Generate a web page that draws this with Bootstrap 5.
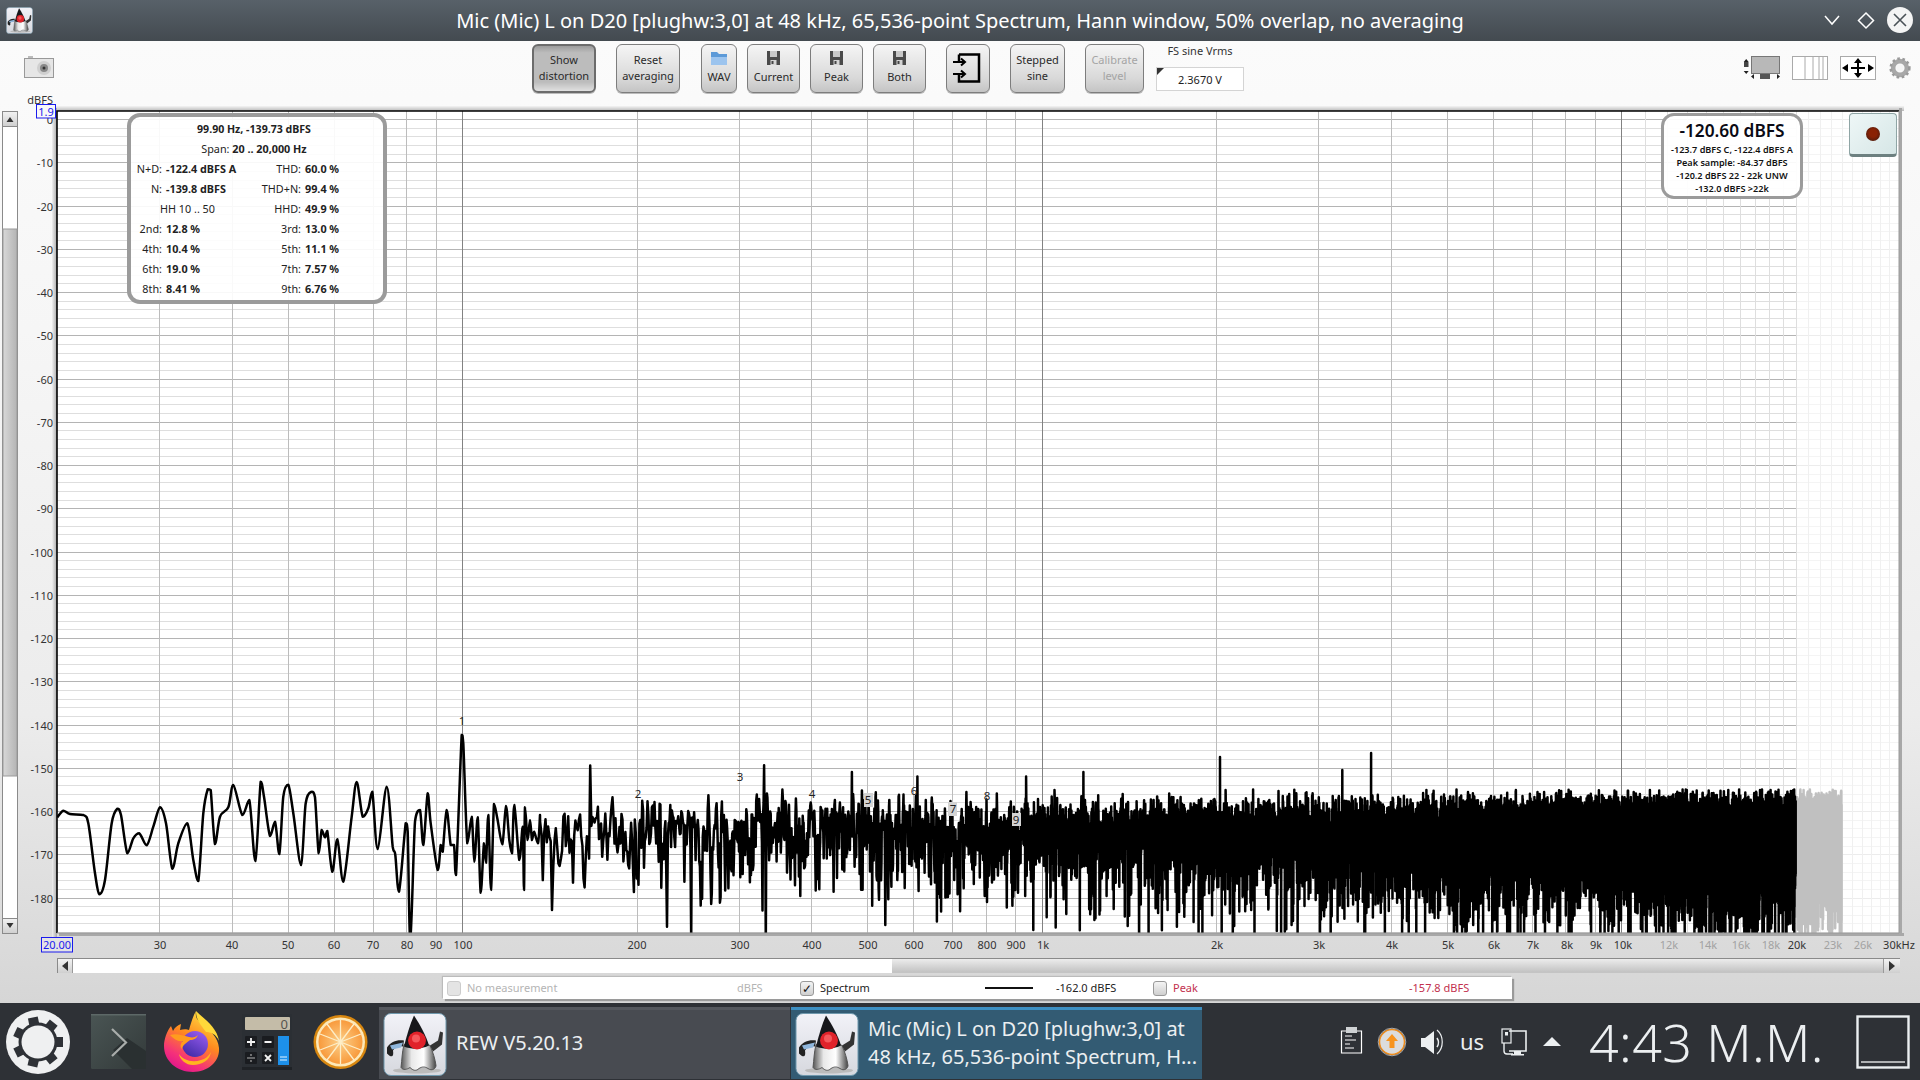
<!DOCTYPE html>
<html lang="en">
<head>
<meta charset="utf-8">
<title>REW Spectrum</title>
<link href="https://cdn.jsdelivr.net/npm/bootstrap@5.3.0/dist/css/bootstrap.min.css" rel="stylesheet">
<style>
html,body{width:1920px;height:1080px;overflow:hidden;margin:0}
body{font-family:"Noto Sans","Liberation Sans",sans-serif;background:#2e3136}
.title-strip{height:41px;background:linear-gradient(#586169,#434a50);color:#fff}
.title-ico{width:96px;padding-left:6px}
.title-txt{font-size:20px;white-space:nowrap}
.win-ctl{width:96px}
.app-win{height:962px;background:linear-gradient(#fbfbfb 0%,#f6f6f6 30%,#ececec 70%,#d6d6d6 100%)}
.tool-row{height:59px;padding-top:3px}
.rew-btn{height:49px;padding:0 0 2px;font-size:11px;line-height:16px;color:#2a2a2a;border:1px solid #7d7d7d;border-radius:6px;background:linear-gradient(#f5f5f5,#d9d9d9 70%,#c4c4c4);box-shadow:0 1px 0 #bbb}
.rew-btn-on{background:linear-gradient(#9c9c9c,#bcbcbc 15%,#bcbcbc 80%,#e0e0e0);border:2px solid #6c6c6c}
.rew-btn-off{color:#a4a4a4}
.stack-btn{line-height:14px}
.stack-btn svg{display:block;margin:0 auto 5px}
.bw64{width:64px}.bw36{width:36px}.bw53{width:53px}.bw44{width:44px}.bw55{width:55px}.bw59{width:59px}
.gap10{margin-left:10px}.gap20{margin-left:20px}.gap21{margin-left:21px}.gap12{margin-left:12px}.gap13{margin-left:13px}
.cam-slot{margin:12px 478px 0 24px}
.fs-slot{width:88px;font-size:11px;color:#333;text-align:center;line-height:14px}
.fs-val{position:relative;margin-top:9px;height:24px;line-height:24px;background:#fff;border:1px solid #d4d4d4;color:#222;font-size:11px}
.fs-val::before{content:"";position:absolute;left:0;top:0;border-top:7px solid #333;border-right:7px solid transparent}
.right-tools{margin-left:auto;padding:12px 9px 0 0}
.plot-wrap{height:855px}
.plot-svg{display:block;overflow:visible}
.axt{font-size:11px;fill:#333;font-family:"Noto Sans",sans-serif}
.axt-faint{fill:#a2a2a2}
.axt-blue{fill:#1a1aee}
.pk{font-size:11.5px;fill:#222;font-family:"Noto Sans",sans-serif}
.info-panel{position:absolute;left:127px;top:13px;width:260px;height:191px;border:4px solid #9b9b9b;border-radius:13px;background:rgba(255,255,255,.9);font-size:10.8px;line-height:20px;color:#222;padding:2px 0 0 0;white-space:nowrap}
.info-grid{display:grid;grid-template-columns:31px 72px 59px auto;column-gap:4px}
.info-span{grid-column:1/-1;text-align:center;padding-right:6px}
.info-tight{font-size:10.6px}
.info-lbl{text-align:right}
.info-mid{grid-column:1/3;text-align:center;padding-left:6px}
.level-panel{position:absolute;left:1661px;top:13px;width:142px;height:86px;border:3px solid #9b9b9b;border-radius:13px;background:rgba(255,255,255,.92);text-align:center;color:#111;font-size:9.1px;font-weight:600;line-height:13px;white-space:nowrap;padding-top:3px}
.level-big{font-size:17.3px;line-height:24px;font-weight:600;color:#0a0a14}
.rec-btn{position:absolute;left:1849px;top:13px;width:48px;height:44px;padding:0;border:1px solid #8fa5a5;border-bottom:3px solid #6d8080;border-radius:4px;background:linear-gradient(135deg,#eef7f7,#d6e6e6)}
.rec-dot{display:block;width:14px;height:14px;margin:auto;border-radius:50%;background:radial-gradient(circle at 50% 45%,#8a2204 35%,#351a12 100%)}
.h-scroll{height:15px;margin:3px 20px 0 57px;border:1px solid #8a8a8a;border-width:1px 0 0 1px}
.sb-end{width:15px;background:linear-gradient(#f2f2f2,#cfcfcf);border-right:1px solid #999;font-size:0}
.sb-end-r{width:17px;border-right:0;border-left:1px solid #999}
.sb-track{width:819px;background:#fff}
.sb-thumb{background:linear-gradient(#ececec,#c4c4c4 90%)}
.legend-bar{display:grid;grid-template-columns:20px 270px 63px 20px 165px 71px 97px 20px 236px auto;align-items:center;height:22px;width:1069px;margin:4px 0 0 443px;padding-left:4px;background:#fff;box-shadow:-1px -1px 1px #bbb,2px 2px 1px #9a9a9a;font-size:11px;color:#222;white-space:nowrap}
.lg-box{width:14px;height:15px;border:1px solid #999;border-radius:3px;background:linear-gradient(#f4f4f4,#cfcfcf);display:block;text-align:center;line-height:13px;font-size:12px;color:#111}
.lg-box-dim{border-color:#ccc;background:#e4e4e4}
.lg-dim{color:#b4b4b4}
.lg-peak{color:#c2304e}
.lg-line{display:block;height:2px;width:48px;background:#111}
.task-row{height:77px;background:#2e3136;color:#eceff1}
.task-row>*{flex-shrink:0}
.ico-gear{margin-left:6px}.ico-term{margin-left:21px}.ico-fx{margin-left:17px}.ico-calc{margin-left:19px}.ico-orange{margin-left:21px}
.task-item{height:72px;margin-top:3px;width:411px;background:#484b51;border-top:3px solid #55585e;font-size:20px;line-height:28px}
.task-first{margin-left:11px}
.task-active{margin-left:1px;background:#335b73;border-top:3px solid #3d8fc2}
.task-lbl{padding:0 0 3px 9px;white-space:nowrap}
.task-ico{margin:0 0 0 4px}
.tray{margin-left:130px}
.tray-us{font-size:22px;width:40px;text-align:center}
.clock{font-size:52px;font-weight:300;margin-left:17px;line-height:77px;white-space:nowrap;width:267px;letter-spacing:.4px}
</style>
</head>
<body>
<svg width="0" height="0" class="d-block">
 <defs>
  <linearGradient id="dkBg" x1="0" y1="0" x2="0" y2="1"><stop offset="0" stop-color="#f2f2f8"/><stop offset="1" stop-color="#d6d8de"/></linearGradient>
  <linearGradient id="dkBody" x1="0" y1="0" x2="1" y2="0"><stop offset="0" stop-color="#555"/><stop offset=".3" stop-color="#e8e8e8"/><stop offset=".65" stop-color="#fff"/><stop offset="1" stop-color="#444"/></linearGradient>
  <symbol id="duke" viewBox="0 0 64 64">
   <rect x="1" y="1" width="62" height="62" rx="7" fill="url(#dkBg)" stroke="#6f98ad"/>
   <ellipse cx="34" cy="58" rx="24" ry="3" fill="#bbb"/>
   <path d="M4 35c4-6 10-8 17-7l-1 6c-5-1-8 1-10 4 1 6-1 8-6 3z" fill="#222"/>
   <path d="M7 33l13-3-2 5-9 2z" fill="#8fb6dc"/>
   <path d="M21 32C30 29 40 29 47 33c3 7 5 13 6 20 0 3-4 6-8 3-3-2-6-2-9 0-3 3-6 2-9-1-3 2-7 3-9 0 1-8 1-15 3-23z" fill="url(#dkBody)" stroke="#555"/>
   <path d="M47 33l8-5 2-9 3 1-1 12-9 7z" fill="#333"/>
   <path d="M31 3C37 12 43 23 46 33 38 37 28 37 21 34 24 22 27 12 31 3z" fill="#17171b"/>
   <circle cx="34" cy="28" r="9" fill="#e0222a"/>
   <circle cx="33" cy="26" r="4" fill="#f4585c"/>
  </symbol>
  <symbol id="floppy" viewBox="0 0 13 14">
   <path d="M0 0h13v14H0z" fill="#4a4a4a"/><rect x="3" y="0" width="7" height="6" fill="#c8c8c8"/><rect x="3.500" y="9" width="6" height="5" fill="#d4d4d4"/><rect x="4.500" y="10" width="2" height="3" fill="#444"/>
  </symbol>
  <linearGradient id="fxMain" x1=".8" y1="0" x2=".3" y2="1"><stop offset="0" stop-color="#ffe747"/><stop offset=".45" stop-color="#ff8a1e"/><stop offset=".8" stop-color="#f5317a"/><stop offset="1" stop-color="#e0158c"/></linearGradient>
  <linearGradient id="fxIn" x1=".8" y1="0" x2=".2" y2="1"><stop offset="0" stop-color="#9a5cf0"/><stop offset="1" stop-color="#3d2aa5"/></linearGradient>
  <radialGradient id="orangeFlesh"><stop offset="0" stop-color="#fcd08a"/><stop offset="1" stop-color="#f89a3c"/></radialGradient>
  <linearGradient id="termBg" x1="0" y1="0" x2="1" y2="1"><stop offset="0" stop-color="#4a5554"/><stop offset="1" stop-color="#333a3a"/></linearGradient>
 </defs>
</svg>

<header class="title-strip d-flex align-items-center">
 <div class="title-ico d-flex"><svg width="27" height="27"><use href="#duke"/></svg></div>
 <div class="title-txt flex-grow-1 text-center">Mic (Mic) L on D20 [plughw:3,0] at 48 kHz, 65,536-point Spectrum, Hann window, 50% overlap, no averaging</div>
 <svg class="win-ctl" width="96" height="41" viewBox="0 0 96 41">
  <path d="M1 16l7 8 7-8" fill="none" stroke="#fff" stroke-width="1.500"/>
  <path d="M42 13l7.500 7.500L42 28l-7.500-7.500z" fill="none" stroke="#fff" stroke-width="1.500"/>
  <circle cx="76" cy="20" r="13" fill="#f4f4f4"/>
  <path d="M70 14l12 12M82 14L70 26" stroke="#4a5157" stroke-width="1.600"/>
 </svg>
</header>

<main class="app-win">
 <div class="tool-row d-flex align-items-start">
  <svg class="cam-slot" width="30" height="22" viewBox="0 0 30 22">
   <rect x="4" y="0" width="5" height="3" fill="#bbb"/>
   <rect x=".5" y="2.500" width="29" height="19" fill="#e6e6e6" stroke="#999"/>
   <circle cx="20" cy="12" r="7" fill="#cfcfcf"/><circle cx="20" cy="12" r="4" fill="#888"/><circle cx="20" cy="12" r="1.500" fill="#333"/>
  </svg>
  <button type="button" class="btn rew-btn rew-btn-on bw64">Show<br>distortion</button>
  <button type="button" class="btn rew-btn bw64 gap20">Reset<br>averaging</button>
  <button type="button" class="btn rew-btn stack-btn bw36 gap21"><svg width="16" height="14" viewBox="0 0 16 14"><path d="M0 1h6l2 2h8v11H0z" fill="#5c9ad8"/><path d="M0 6h16v8H0z" fill="#9cc4ee"/></svg>WAV</button>
  <button type="button" class="btn rew-btn stack-btn bw53 gap10"><svg width="13" height="14"><use href="#floppy"/></svg>Current</button>
  <button type="button" class="btn rew-btn stack-btn bw53 gap10"><svg width="13" height="14"><use href="#floppy"/></svg>Peak</button>
  <button type="button" class="btn rew-btn stack-btn bw53 gap10"><svg width="13" height="14"><use href="#floppy"/></svg>Both</button>
  <button type="button" class="btn rew-btn bw44 gap20"><svg width="30" height="30" viewBox="0 0 30 30"><path d="M6 1.500h20v27H6V21M6 10V1.500" fill="none" stroke="#000" stroke-width="2.500"/><path d="M0 9h11M8 5.500l4 3.500-4 3.500M0 21h11M8 17.500l4 3.500-4 3.500" fill="none" stroke="#000" stroke-width="2"/></svg></button>
  <button type="button" class="btn rew-btn bw55 gap20">Stepped<br>sine</button>
  <button type="button" class="btn rew-btn rew-btn-off bw59 gap20">Calibrate<br>level</button>
  <div class="fs-slot gap12">FS sine Vrms<div class="fs-val">2.3670 V</div></div>
  <div class="right-tools d-flex align-items-center">
   <svg width="39" height="24" viewBox="0 0 39 24"><rect x="8.500" y=".5" width="28" height="17" fill="#b8b8b8" stroke="#777"/><rect x="1" y="6" width="4.500" height="5" fill="#444"/><path d="M3.200 1l2.500 3h-5zM3.200 16l2.500-3h-5zM11 21l-3-2.500 3-2.500zM34 21l3-2.500-3-2.500z" fill="#222" transform="translate(0 2)"/><rect x="17" y="18" width="10" height="5" fill="#555"/></svg>
   <svg class="gap10" width="36" height="24" viewBox="0 0 36 24"><rect x=".5" y=".5" width="35" height="23" fill="#fff" stroke="#aaa"/><path d="M13 0v24M21 0v24M27 0v24M31 0v24" stroke="#aaa"/></svg>
   <svg class="gap12" width="36" height="24" viewBox="0 0 36 24"><rect x=".5" y=".5" width="35" height="23" fill="#fff" stroke="#aaa"/><path d="M11 12h14M18 5v14" stroke="#000" stroke-width="2"/><path d="M2 12l6-4v8zM34 12l-6-4v8zM18 2l-4 5h8zM18 22l-4-5h8z" fill="#000"/></svg>
   <svg class="gap13" width="22" height="22" viewBox="0 0 24 24"><circle cx="12" cy="12" r="7.500" fill="none" stroke="#a8a8a8" stroke-width="5"/><circle cx="12" cy="12" r="10.200" fill="none" stroke="#9a9a9a" stroke-width="2.800" stroke-dasharray="2.800 2.800"/><circle cx="12" cy="12" r="4" fill="#f6f6f6"/></svg>
  </div>
 </div>

 <div class="plot-wrap position-relative">
  <svg class="plot-svg" id="plot" width="1920" height="855" viewBox="0 100 1920 855">
   <defs><clipPath id="plotClip"><rect x="57" y="111" width="1842" height="822"/></clipPath>
   <linearGradient id="vThumb" x1="0" y1="0" x2="1" y2="0"><stop offset="0" stop-color="#d8d8d8"/><stop offset="1" stop-color="#b4b4b4"/></linearGradient>
   <linearGradient id="vBtn" x1="0" y1="0" x2="0" y2="1"><stop offset="0" stop-color="#f2f2f2"/><stop offset="1" stop-color="#cfcfcf"/></linearGradient>
   <linearGradient id="edgeT" x1="0" y1="0" x2="0" y2="1"><stop offset="0" stop-color="#f4f4f4"/><stop offset="1" stop-color="#b8b8b8"/></linearGradient>
   <linearGradient id="edgeL" x1="0" y1="0" x2="1" y2="0"><stop offset="0" stop-color="#f0f0f0"/><stop offset="1" stop-color="#a8a8a8"/></linearGradient></defs>
   <rect x="52" y="106" width="1852" height="5" fill="url(#edgeT)"/>
   <rect x="52" y="108" width="5" height="830" fill="url(#edgeL)"/>
   <rect x="59" y="933" width="1845" height="3" fill="#a8a8a8"/>
   <rect x="1899" y="108" width="3" height="828" fill="#a8a8a8"/>
   <rect x="57" y="111" width="1842" height="822" fill="#fff"/>
   <g id="gridG"></g>
   <g clip-path="url(#plotClip)" id="dataG"></g>
   <g>
    <text class="pk" x="462" y="725" text-anchor="middle">1</text>
    <text class="pk" x="638" y="798" text-anchor="middle">2</text>
    <text class="pk" x="740" y="781" text-anchor="middle">3</text>
    <text class="pk" x="812" y="798" text-anchor="middle">4</text>
    <rect x="864" y="793" width="9" height="14" fill="#d4d4d4"/>
    <text class="pk" x="868" y="804" text-anchor="middle">5</text>
    <text class="pk" x="914" y="795" text-anchor="middle">6</text>
    <rect x="948" y="802" width="9" height="14" fill="#d4d4d4"/>
    <text class="pk" x="953" y="813" text-anchor="middle">7</text>
    <text class="pk" x="987" y="800" text-anchor="middle">8</text>
    <rect x="1012" y="813" width="9" height="13" fill="#d4d4d4"/>
    <text class="pk" x="1016" y="824" text-anchor="middle">9</text>
   </g>
   <path d="M57 933V111H1899" fill="none" stroke="#000" stroke-width="1.600"/>
   <path d="M1899 111V933H57" fill="none" stroke="#9a9a9a" stroke-width="1"/>
   <!-- vertical scrollbar -->
   <rect x="2.500" y="111.500" width="15" height="822" fill="#fff" stroke="#8a8a8a"/>
   <rect x="3" y="229" width="14" height="547" fill="url(#vThumb)" stroke="#9a9a9a"/>
   <rect x="2.500" y="111.500" width="15" height="15" fill="url(#vBtn)" stroke="#8a8a8a"/>
   <rect x="2.500" y="918.500" width="15" height="15" fill="url(#vBtn)" stroke="#8a8a8a"/>
   <path d="M6.500 122l3.500-5 3.500 5zM6.500 923l3.500 5 3.500-5z" fill="#333"/>
   <!-- y axis -->
   <g text-anchor="end">
    <text class="axt" x="53" y="103.500">dBFS</text>
    <text class="axt" x="53" y="124">0</text>
    <text class="axt" x="53" y="167">-10</text>
    <text class="axt" x="53" y="210.500">-20</text>
    <text class="axt" x="53" y="254">-30</text>
    <text class="axt" x="53" y="297">-40</text>
    <text class="axt" x="53" y="340">-50</text>
    <text class="axt" x="53" y="383.500">-60</text>
    <text class="axt" x="53" y="427">-70</text>
    <text class="axt" x="53" y="470">-80</text>
    <text class="axt" x="53" y="513">-90</text>
    <text class="axt" x="53" y="556.500">-100</text>
    <text class="axt" x="53" y="600">-110</text>
    <text class="axt" x="53" y="643">-120</text>
    <text class="axt" x="53" y="686">-130</text>
    <text class="axt" x="53" y="729.500">-140</text>
    <text class="axt" x="53" y="773">-150</text>
    <text class="axt" x="53" y="816">-160</text>
    <text class="axt" x="53" y="859">-170</text>
    <text class="axt" x="53" y="902.500">-180</text>
   </g>
   <rect x="36.500" y="104.500" width="19" height="13.500" fill="#f8f8f8" stroke="#1a1aee"/>
   <text class="axt axt-blue" x="46" y="115.500" text-anchor="middle">1.9</text>
   <!-- x axis -->
   <g text-anchor="middle">
    <rect x="41.500" y="937.500" width="31" height="14.500" fill="#e4e4e4" stroke="#1a1aee"/>
    <text class="axt axt-blue" x="57" y="949">20.00</text>
    <text class="axt" x="160" y="949">30</text>
    <text class="axt" x="232" y="949">40</text>
    <text class="axt" x="288" y="949">50</text>
    <text class="axt" x="334" y="949">60</text>
    <text class="axt" x="373" y="949">70</text>
    <text class="axt" x="407" y="949">80</text>
    <text class="axt" x="436" y="949">90</text>
    <text class="axt" x="463" y="949">100</text>
    <text class="axt" x="637" y="949">200</text>
    <text class="axt" x="740" y="949">300</text>
    <text class="axt" x="812" y="949">400</text>
    <text class="axt" x="868" y="949">500</text>
    <text class="axt" x="914" y="949">600</text>
    <text class="axt" x="953" y="949">700</text>
    <text class="axt" x="987" y="949">800</text>
    <text class="axt" x="1016" y="949">900</text>
    <text class="axt" x="1043" y="949">1k</text>
    <text class="axt" x="1217" y="949">2k</text>
    <text class="axt" x="1319" y="949">3k</text>
    <text class="axt" x="1392" y="949">4k</text>
    <text class="axt" x="1448" y="949">5k</text>
    <text class="axt" x="1494" y="949">6k</text>
    <text class="axt" x="1533" y="949">7k</text>
    <text class="axt" x="1567" y="949">8k</text>
    <text class="axt" x="1596" y="949">9k</text>
    <text class="axt" x="1623" y="949">10k</text>
    <text class="axt axt-faint" x="1669" y="949">12k</text>
    <text class="axt axt-faint" x="1708" y="949">14k</text>
    <text class="axt axt-faint" x="1741" y="949">16k</text>
    <text class="axt axt-faint" x="1771" y="949">18k</text>
    <text class="axt" x="1797" y="949">20k</text>
    <text class="axt axt-faint" x="1833" y="949">23k</text>
    <text class="axt axt-faint" x="1863" y="949">26k</text>
    <text class="axt" x="1899" y="949">30kHz</text>
   </g>
  </svg>

  <div class="info-panel">
   <div class="info-grid">
    <div class="info-span info-tight fw-bold">99.90 Hz, -139.73 dBFS</div>
    <div class="info-span">Span: <b>20 .. 20,000 Hz</b></div>
    <div class="info-lbl">N+D:</div><div class="fw-bold">-122.4 dBFS A</div><div class="info-lbl">THD:</div><div class="fw-bold">60.0 %</div>
    <div class="info-lbl">N:</div><div class="fw-bold">-139.8 dBFS</div><div class="info-lbl">THD+N:</div><div class="fw-bold">99.4 %</div>
    <div class="info-mid">HH 10 .. 50</div><div class="info-lbl">HHD:</div><div class="fw-bold">49.9 %</div>
    <div class="info-lbl">2nd:</div><div class="fw-bold">12.8 %</div><div class="info-lbl">3rd:</div><div class="fw-bold">13.0 %</div>
    <div class="info-lbl">4th:</div><div class="fw-bold">10.4 %</div><div class="info-lbl">5th:</div><div class="fw-bold">11.1 %</div>
    <div class="info-lbl">6th:</div><div class="fw-bold">19.0 %</div><div class="info-lbl">7th:</div><div class="fw-bold">7.57 %</div>
    <div class="info-lbl">8th:</div><div class="fw-bold">8.41 %</div><div class="info-lbl">9th:</div><div class="fw-bold">6.76 %</div>
   </div>
  </div>
  <div class="level-panel">
   <div class="level-big">-120.60 dBFS</div>
   <div>-123.7 dBFS C, -122.4 dBFS A</div>
   <div>Peak sample: -84.37 dBFS</div>
   <div>-120.2 dBFS 22 - 22k UNW</div>
   <div>-132.0 dBFS &gt;22k</div>
  </div>
  <button type="button" class="btn rec-btn" aria-label="Record"><span class="rec-dot"></span></button>
 </div>

 <div class="h-scroll d-flex">
  <div class="sb-end d-flex align-items-center justify-content-center"><svg width="6" height="10" viewBox="0 0 6 10"><path d="M6 0v10L0 5z" fill="#333"/></svg></div>
  <div class="sb-track"></div>
  <div class="sb-thumb flex-grow-1"></div>
  <div class="sb-end sb-end-r d-flex align-items-center justify-content-center"><svg width="6" height="10" viewBox="0 0 6 10"><path d="M0 0v10l6-5z" fill="#333"/></svg></div>
 </div>

 <div class="legend-bar">
  <span class="lg-box lg-box-dim"></span><span class="lg-dim">No measurement</span><span class="lg-dim">dBFS</span>
  <span class="lg-box">&#10003;</span><span>Spectrum</span><span class="lg-line"></span><span>-162.0 dBFS</span>
  <span class="lg-box"></span><span class="lg-peak">Peak</span><span class="lg-peak">-157.8 dBFS</span>
 </div>
</main>

<footer class="task-row d-flex align-items-center">
 <svg class="ico-gear" width="64" height="64" viewBox="0 0 64 64">
  <circle cx="32" cy="32" r="32" fill="#eff0f1"/>
  <g fill="#2e3136">
   <circle cx="32" cy="32" r="19.500"/>
   <rect x="27" y="7" width="10" height="9" transform="rotate(-12 32 32)"/>
   <rect x="27" y="7" width="10" height="9" transform="rotate(39 32 32)"/>
   <rect x="27" y="7" width="10" height="9" transform="rotate(90 32 32)"/>
   <rect x="27" y="7" width="10" height="9" transform="rotate(141 32 32)"/>
   <rect x="27" y="7" width="10" height="9" transform="rotate(193 32 32)"/>
   <rect x="27" y="7" width="10" height="9" transform="rotate(244 32 32)"/>
   <rect x="27" y="7" width="10" height="9" transform="rotate(295 32 32)"/>
  </g>
  <circle cx="32" cy="32" r="16.500" fill="#eff0f1"/>
 </svg>
 <svg class="ico-term" width="55" height="56" viewBox="0 0 55 56">
  <rect width="55" height="55" rx="1.500" fill="url(#termBg)"/>
  <rect width="55" height="1.500" fill="#5d6867"/>
  <path d="M22 36L41 55h14V37L36 24z" fill="#2a3031"/>
  <path d="M21 15l14 13.500L21 42" fill="none" stroke="#a9adab" stroke-width="2.200"/>
 </svg>
 <svg class="ico-fx" width="60" height="62" viewBox="0 0 60 62">
  <path d="M33 0c-1 6 1 9 6 13 8 6 16 13 17 24C57 51 45 61 30 61 14 61 1 50 1 35 1 28 4 20 8 15l2 5c2-4 5-6 8-7l-1 6c3-1 7-1 9 0C28 12 30 5 33 0z" fill="url(#fxMain)"/>
  <path d="M33 0c8 8 21 16 23 30-3-7-8-9-13-9-4-6-10-11-10-21z" fill="#ffd93a"/>
  <circle cx="32" cy="33" r="13" fill="url(#fxIn)"/>
  <path d="M7 24c6-2 12 0 19 2 4 1 7 0 9-2-1 3-4 5-8 5-2 2-7 4-8 9-2-2-2-5 1-8-5 1-9-2-13-6z" fill="#ff9c1e"/>
  <path d="M16 43c4 6 13 9 22 6 4-1 8-4 10-8-1 8-9 13-18 13-7 0-13-5-14-11z" fill="#ffb61f"/>
 </svg>
 <svg class="ico-calc" width="50" height="56" viewBox="0 0 50 56">
  <rect width="50" height="55" rx="1" fill="#2b2f34"/>
  <rect y="53" width="50" height="3" fill="#1f2226"/>
  <rect x="3" y="3" width="45" height="13" rx="1" fill="#c4bca8"/>
  <text x="46" y="14.500" text-anchor="end" font-size="13" fill="#55554f" font-family="Noto Sans, sans-serif">0</text>
  <rect x="3" y="22" width="12" height="12" rx="1" fill="#1a1c20"/><rect x="20" y="22" width="12" height="12" rx="1" fill="#1a1c20"/>
  <rect x="3" y="38" width="12" height="12" rx="1" fill="#1a1c20"/><rect x="20" y="38" width="12" height="12" rx="1" fill="#1a1c20"/>
  <path d="M5 28h8M9 24v8M22.500 28h7" stroke="#f2f2f2" stroke-width="1.800"/>
  <path d="M5 44h8" stroke="#999" stroke-width="1.200"/><circle cx="9" cy="41" r=".9" fill="#999"/><circle cx="9" cy="47" r=".9" fill="#999"/>
  <path d="M23 41l6 6M29 41l-6 6" stroke="#f2f2f2" stroke-width="1.800"/>
  <rect x="36" y="22" width="11" height="29" fill="#1d90ea"/>
  <path d="M38 43h7M38 46h7" stroke="#e6f3ff" stroke-width="1.200"/>
 </svg>
 <svg class="ico-orange" width="55" height="56" viewBox="0 0 55 56">
  <circle cx="27.500" cy="28" r="27" fill="#d8870f"/>
  <circle cx="27.500" cy="28" r="24.500" fill="#fde8b8"/>
  <circle cx="27.500" cy="28" r="22" fill="url(#orangeFlesh)"/>
  <path d="M27.500 6v44M7 20l41 16M7 36l41-16M14 10l27 36M41 10L14 46" stroke="#fdeec8" stroke-width="1.300"/>
 </svg>
 <div class="task-item task-first d-flex align-items-center">
  <svg class="task-ico" width="64" height="65"><use href="#duke"/></svg>
  <span class="task-lbl">REW V5.20.13</span>
 </div>
 <div class="task-item task-active d-flex align-items-center">
  <svg class="task-ico" width="64" height="65"><use href="#duke"/></svg>
  <span class="task-lbl">Mic (Mic) L on D20 [plughw:3,0] at<br>48 kHz, 65,536-point Spectrum, H...</span>
 </div>
 <div class="tray d-flex align-items-center">
  <svg width="40" height="40" viewBox="-9 -2 40 40">
   <path d="M0.500 7h20v22h-20z" fill="none" stroke="#fff" stroke-width="1.200"/><rect x="5" y="3" width="11" height="6" fill="#cfd2d4"/>
   <path d="M4 12h7M4 16h11M4 20h5M4 24h9" stroke="#fff" stroke-width="1"/>
  </svg>
  <svg width="40" height="40" viewBox="0 0 40 40">
   <circle cx="20" cy="20" r="12.500" fill="#dcdcdc" stroke="#f08c1a" stroke-width="1.500"/>
   <circle cx="20" cy="20" r="13.800" fill="none" stroke="#aaa" stroke-width="1"/>
   <path d="M20 12l6 7h-3.500v7h-5v-7H14z" fill="#f8941e"/>
  </svg>
  <svg width="40" height="40" viewBox="0 0 40 40">
   <path d="M9 16h4l9-7v23l-9-7H9z" fill="#eceff1"/>
   <path d="M25 8c7 6 7 18 0 24" fill="none" stroke="#eceff1" stroke-width="1.200"/>
   <path d="M25 16c2 3 2 6 0 9" fill="none" stroke="#eceff1" stroke-width="1.500"/>
  </svg>
  <div class="tray-us">us</div>
  <svg width="40" height="40" viewBox="0 0 40 40">
   <path d="M17 9h17v20H17" fill="none" stroke="#eceff1" stroke-width="1.600"/>
   <rect x="10" y="7" width="9" height="14" fill="none" stroke="#eceff1" stroke-width="1.200"/><rect x="13" y="10" width="3" height="3.500" fill="#eceff1"/>
   <path d="M12 21v8c0 2 1 3 3 3h6" fill="none" stroke="#eceff1" stroke-width="1.400"/>
   <rect x="22" y="29" width="7" height="3" fill="#eceff1"/><rect x="19" y="32" width="13" height="1.500" fill="#eceff1"/>
  </svg>
  <svg width="40" height="40" viewBox="0 0 40 40"><path d="M11 24l9-9 9 9z" fill="#eceff1"/></svg>
 </div>
 <div class="clock">4:43 M.M.</div>
 <svg width="54" height="54" viewBox="0 0 54 54">
  <rect x="1.500" y="1.500" width="51" height="51" fill="none" stroke="#eceff1" stroke-width="2.400"/>
  <path d="M5 47h44" stroke="#aeb0b2" stroke-width="2.200"/>
 </svg>
</footer>

<script src="https://cdn.jsdelivr.net/npm/bootstrap@5.3.0/dist/js/bootstrap.bundle.min.js"></script>
<script>
(function(){
 var NS='http://www.w3.org/2000/svg';
 var fx=function(f){return 462.3+579.5*Math.log10(f/100);};
 var dby=function(d){return 119+(-d)*4.325;};
 var gridG=document.getElementById('gridG'), dataG=document.getElementById('dataG');
 function line(x1,y1,x2,y2,c,w){var l=document.createElementNS(NS,'line');l.setAttribute('x1',x1);l.setAttribute('y1',y1);l.setAttribute('x2',x2);l.setAttribute('y2',y2);l.setAttribute('stroke',c);l.setAttribute('stroke-width',w||1);gridG.appendChild(l);}
 var x20=Math.round(fx(20000))+1;
 for(var d=0;d>=-188;d-=2){
  var y=Math.round(dby(d))+.5, maj=d%10===0;
  line(57,y,x20,y,maj?'#b4b4b4':'#dedede');
  line(x20,y,1899,y,maj?'#ececec':'#f4f4f4');
 }
 var fs=[];
 for(var f=30;f<100;f+=10)fs.push(f);
 for(f=100;f<=1000;f+=100)fs.push(f);
 for(f=2000;f<=10000;f+=1000)fs.push(f);
 for(f=11000;f<=29000;f+=1000)fs.push(f);
 fs.forEach(function(f){
  var x=Math.round(fx(f))+.5, c='#bcbcbc';
  if(f===100||f===1000||f===10000)c='#828282';
  else if(f>20000)c='#f0f0f0';
  else if(f>10000)c='#dedede';
  line(x,111,x,933,c);
 });
 var p=[[52,352],[70,332],[90,342],[130,345],[145,370],[165,520],[178,583],[195,540],[215,370],[232,326],[243,345],[262,460],[280,415],[298,400],[320,436],[340,380],[360,322],[378,370],[397,506],[415,430],[442,370],[460,480],[475,543],[490,340],[503,268],[512,270],[525,432],[540,350],[565,322],[580,255],[607,345],[628,300],[646,483],[662,245],[672,290],[690,408],[705,365],[718,462],[730,290],[745,254],[760,340],[783,495],[797,310],[815,275],[825,292],[836,460],[845,390],[855,412],[862,393],[877,515],[892,418],[910,545],[935,350],[950,246],[968,350],[985,325],[997,275],[1013,447],[1040,260],[1058,440],[1066,465],[1077,575],[1097,370],[1103,395],[1111,720],[1125,365],[1140,330],[1150,435],[1163,280],[1172,370],[1193,510],[1202,435],[1208,455],[1220,330],[1232,435],[1242,435],[1248,525],[1265,105],[1270,130],[1282,430],[1295,350],[1303,485],[1313,352],[1322,578],[1332,430],[1338,488],[1345,345],[1353,570],[1362,312],[1372,355],[1387,433],[1398,318],[1408,420],[1416,460],[1423,315],[1438,480],[1448,380],[1452,570],[1455,322],[1463,420],[1470,360],[1476,420],[1482,395],[1494,430],[1500,345]]
  .map(function(a){return [40+a[0]/3,700+a[1]/3];});
 var s='M'+p[0][0].toFixed(1)+' '+p[0][1].toFixed(1);
 function clampY(v,a,b){return Math.min(Math.max(v,Math.min(a,b)),Math.max(a,b));}
 for(var i=0;i<p.length-1;i++){
  var a=p[Math.max(i-1,0)],b=p[i],c=p[i+1],e=p[Math.min(i+2,p.length-1)],t=.16;
  var y1=clampY(b[1]+(c[1]-a[1])*t,b[1],c[1]),y2=clampY(c[1]-(e[1]-b[1])*t,b[1],c[1]);
  s+='C'+(b[0]+(c[0]-a[0])*t).toFixed(1)+' '+y1.toFixed(1)+' '+(c[0]-(e[0]-b[0])*t).toFixed(1)+' '+y2.toFixed(1)+' '+c[0].toFixed(1)+' '+c[1].toFixed(1);
 }
 var st=20240813;
 function rnd(){st|=0;st=st+0x6D2B79F5|0;var t=Math.imul(st^st>>>15,1|st);t=t+Math.imul(t^t>>>7,61|t)^t;return((t^t>>>14)>>>0)/4294967296;}
 function gs(){return Math.sqrt(-2*Math.log(1-rnd()))*Math.cos(6.28318530718*rnd());}
 var df=48000/65536,N=32768,k0=186,re=[],im=[];
 for(i=0;i<=N+1;i++){re.push(gs());im.push(gs());}
 var spikes={166:-149.5,332:-149.4,470:-151,610:-152,940:-152,2030:-147.5,3700:-146.6,1180:-151,3300:-150.5};
 var spk={};Object.keys(spikes).forEach(function(f){spk[Math.round(f/df)]=spikes[f];});
 var kBreak=Math.round(20000/df);
 var black=s, grey='';
 for(var k=k0;k<=N;k++){
  var rr=.5*re[k]-.25*(re[k-1]+re[k+1]), ii=.5*im[k]-.25*(im[k-1]+im[k+1]);
  var P=(rr*rr+ii*ii)/(2*.375);
  var db=-163.6+10*Math.log10(P+1e-6);
  if(db>-155)db=-155-(db+155)*.3;
  if(spk[k]!==undefined)db=spk[k];
  var X=fx(k*df),Y=Math.min(dby(db),945);
  var pt=X.toFixed(1)+' '+Y.toFixed(1);
  if(k<=kBreak)black+='L'+pt;
  if(k===kBreak)grey='M'+pt;
  if(k>kBreak)grey+='L'+pt;
 }
 function draw(d,col,w){var q=document.createElementNS(NS,'path');q.setAttribute('d',d);q.setAttribute('fill','none');q.setAttribute('stroke',col);q.setAttribute('stroke-width',w);q.setAttribute('stroke-linejoin','round');dataG.appendChild(q);}
 draw(grey,'#c0c0c0',2.5);
 draw(black,'#000',2.5);
})();
</script>
</body>
</html>
